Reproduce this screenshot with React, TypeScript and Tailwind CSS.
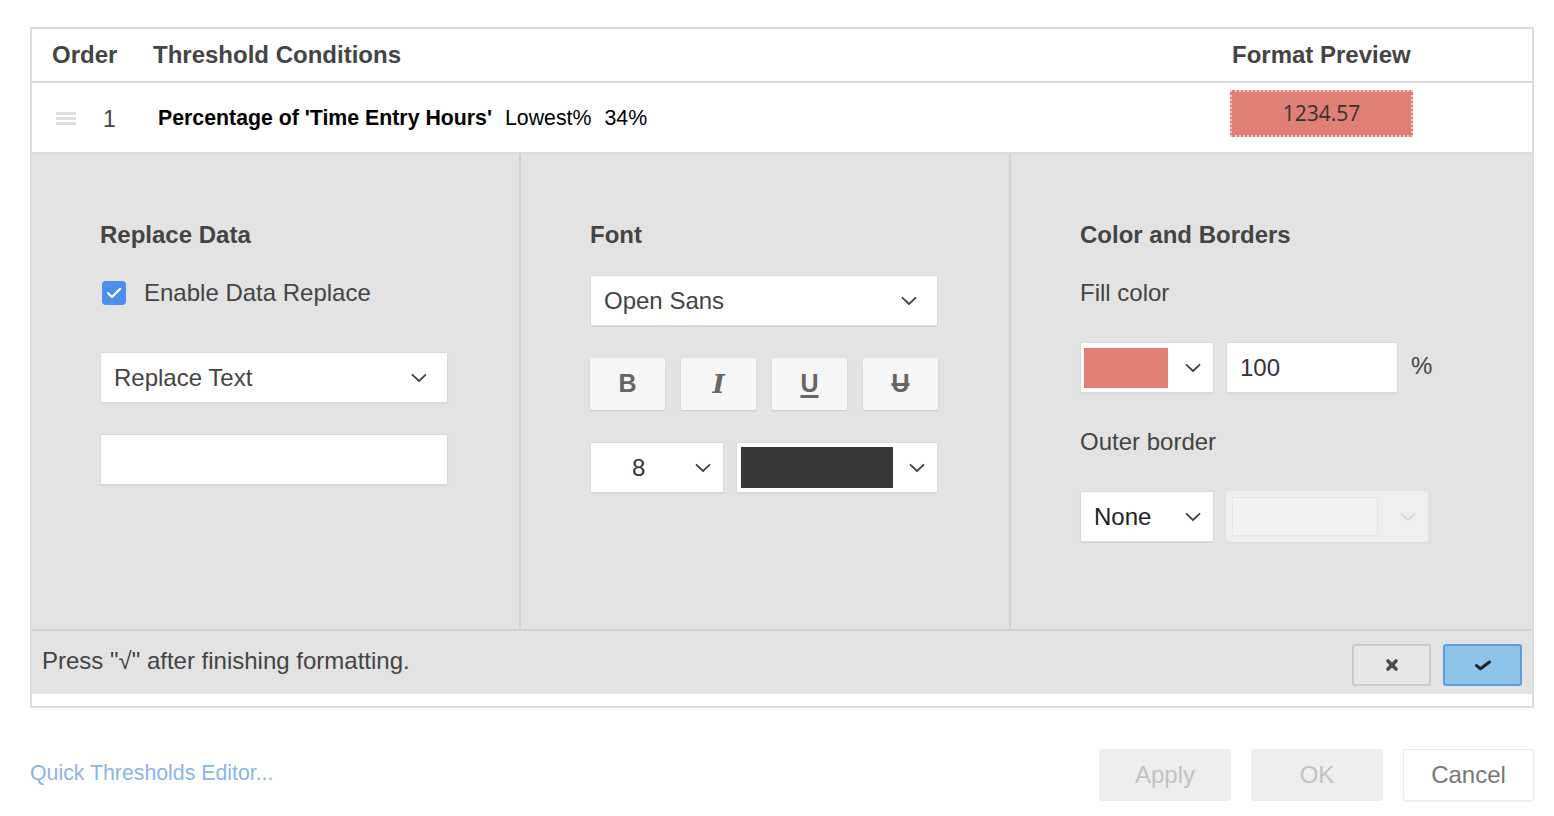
import React from "react";

const SANS = "font-['Liberation_Sans',Arial,sans-serif]";

function Chevron({ className = "" }: { className?: string }) {
  return (
    <svg width="16" height="10" viewBox="0 0 16 10" className={className} fill="none">
      <path d="M1.5 1.8 L8 8 L14.5 1.8" stroke="currentColor" strokeWidth="1.8" strokeLinecap="round" strokeLinejoin="round" />
    </svg>
  );
}

function SelectBox({
  children,
  className = "",
  chevronClass = "text-[#444]",
  pr = "pr-[20px]",
}: {
  children?: React.ReactNode;
  className?: string;
  chevronClass?: string;
  pr?: string;
}) {
  return (
    <div
      className={`flex items-center justify-between bg-white border border-[#dadada] rounded-[2px] shadow-[0_1px_1px_rgba(0,0,0,0.06)] ${pr} ${className}`}
    >
      <div className="flex-1 min-w-0 flex items-center h-full">{children}</div>
      <Chevron className={chevronClass} />
    </div>
  );
}

function StyleButton({ children }: { children: React.ReactNode }) {
  return (
    <div className="h-[52px] w-[75px] flex items-center justify-center bg-[#f6f6f6] rounded-[2px] shadow-[0_1px_2px_rgba(0,0,0,0.12)]">
      {children}
    </div>
  );
}

export default function App() {
  return (
    <div className={`${SANS} bg-white w-[1554px] h-[816px] pt-[27px] pl-[30px]`}>
      {/* threshold table */}
      <div className="w-[1504px] border-2 border-[#dcdcdc]">
        {/* header */}
        <div className="h-[54px] flex items-center border-b-2 border-[#dcdcdc] text-[24px] font-bold text-[#444] leading-[28px]">
          <div className="pl-[20px] w-[121px]">Order</div>
          <div className="flex-1">Threshold Conditions</div>
          <div className="w-[300px]">Format Preview</div>
        </div>

        {/* condition row */}
        <div className="h-[71px] flex items-center border-b-2 border-[#dcdcdc]">
          <div className="pl-[24px] w-[71px] flex flex-col gap-[2px] pt-[2px]">
            <div className="h-[3px] w-[20px] bg-[#dfdfdf]" />
            <div className="h-[3px] w-[20px] bg-[#dfdfdf]" />
            <div className="h-[3px] w-[20px] bg-[#dfdfdf]" />
          </div>
          <div className="w-[55px] text-[23px] text-[#444] leading-[26px] pt-[3px]">1</div>
          <div className="flex-1 flex items-center text-[21.3px] leading-[24px] text-black">
            <span className="font-bold">Percentage of 'Time Entry Hours'</span>
            <span className="ml-[13px]">Lowest%</span>
            <span className="ml-[13px]">34%</span>
          </div>
          <div className="w-[302px]">
            <div className="w-[183px] h-[47px] bg-[#df7f76] border-2 border-dotted border-[#f3c9c3] flex items-center justify-center font-['Open_Sans',sans-serif] text-[21px] text-[#333] mb-[8px]">
              1234.57
            </div>
          </div>
        </div>

        {/* editor panel */}
        <div className="grid grid-cols-[489px_490px_1fr] bg-[#e3e3e3] h-[477px] border-b-2 border-[#d2d2d2]">
          {/* Replace Data */}
          <div className="border-r-2 border-[#d2d2d2] pl-[68px] pt-[67px]">
            <div className="text-[24px] font-bold text-[#444] leading-[28px]">Replace Data</div>
            <div className="mt-[30px] flex items-center h-[28px]">
              <div className="ml-[2px] w-[24px] h-[24px] rounded-[4px] bg-[#4a8ef0] flex items-center justify-center">
                <svg width="16" height="12" viewBox="0 0 16 12" fill="none">
                  <path d="M2 6.2 L6 10 L14 2" stroke="white" strokeWidth="2.4" strokeLinecap="round" strokeLinejoin="round" />
                </svg>
              </div>
              <span className="ml-[18px] text-[24px] text-[#444] leading-[28px]">Enable Data Replace</span>
            </div>
            <SelectBox className="mt-[45px] w-[348px] h-[51px]">
              <span className="pl-[13px] text-[24px] text-[#444]">Replace Text</span>
            </SelectBox>
            <div className="mt-[31px] w-[348px] h-[51px] bg-white border border-[#dadada] rounded-[2px] shadow-[0_1px_1px_rgba(0,0,0,0.06)]" />
          </div>

          {/* Font */}
          <div className="border-r-2 border-[#d2d2d2] pl-[69px] pt-[67px]">
            <div className="text-[24px] font-bold text-[#444] leading-[28px]">Font</div>
            <SelectBox className="mt-[26px] w-[348px] h-[51px]">
              <span className="pl-[13px] text-[24px] text-[#444]">Open Sans</span>
            </SelectBox>
            <div className="mt-[32px] w-[348px] flex justify-between">
              <StyleButton>
                <span className="text-[25px] font-bold text-[#666]">B</span>
              </StyleButton>
              <StyleButton>
                <span className="text-[26px] font-bold italic text-[#666] font-['DejaVu_Serif',serif]">I</span>
              </StyleButton>
              <StyleButton>
                <span className="text-[25px] font-bold text-[#666] underline decoration-[3px] underline-offset-[3px]">U</span>
              </StyleButton>
              <StyleButton>
                <span className="text-[25px] font-bold text-[#666] line-through decoration-[3px]">U</span>
              </StyleButton>
            </div>
            <div className="mt-[32px] w-[348px] flex justify-between">
              <SelectBox className="w-[134px] h-[51px]" pr="pr-[12px]">
                <span className="pl-[41px] text-[24px] text-[#333]">8</span>
              </SelectBox>
              <SelectBox className="w-[202px] h-[51px]" pr="pr-[12px]">
                <div className="ml-[4px] w-[152px] h-[41px] bg-[#363638]" />
              </SelectBox>
            </div>
          </div>

          {/* Color and Borders */}
          <div className="pl-[69px] pt-[67px]">
            <div className="text-[24px] font-bold text-[#444] leading-[28px]">Color and Borders</div>
            <div className="mt-[30px] text-[24px] text-[#444] leading-[28px]">Fill color</div>
            <div className="mt-[35px] flex items-start">
              <SelectBox className="w-[134px] h-[51px]" pr="pr-[12px]">
                <div className="ml-[3px] w-[84px] h-[40px] bg-[#df7f76]" />
              </SelectBox>
              <div className="ml-[12px] w-[172px] h-[51px] bg-white border border-[#dadada] rounded-[2px] shadow-[0_1px_1px_rgba(0,0,0,0.06)] flex items-center pl-[13px] text-[24px] text-[#333]">
                100
              </div>
              <span className="ml-[13px] mt-[6px] text-[24px] text-[#444]">%</span>
            </div>
            <div className="mt-[35px] text-[24px] text-[#444] leading-[28px]">Outer border</div>
            <div className="mt-[35px] flex items-start">
              <SelectBox className="w-[134px] h-[51px]" pr="pr-[12px]">
                <span className="pl-[13px] text-[24px] text-[#222]">None</span>
              </SelectBox>
              <div className="ml-[12px] w-[202px] h-[51px] bg-[#efefef] rounded-[2px] flex items-center justify-between pl-[6px] pr-[12px] shadow-[0_1px_1px_rgba(0,0,0,0.04)]">
                <div className="w-[146px] h-[39px] bg-[#f2f2f2] border border-[#e6e6e6]" />
                <Chevron className="text-[#d6d6d6]" />
              </div>
            </div>
          </div>
        </div>

        {/* confirm bar */}
        <div className="h-[63px] bg-[#e3e3e3] flex items-center justify-between pl-[10px] pr-[10px]">
          <span className="text-[24px] text-[#444] leading-[28px] -mt-[3px]">Press "√" after finishing formatting.</span>
          <div className="flex gap-[12px] pt-[4px]">
            <div className="w-[79px] h-[42px] rounded-[3px] border-2 border-[#cbcbcb] bg-[#e7e7e7] flex items-center justify-center">
              <svg width="14" height="14" viewBox="0 0 14 14">
                <path d="M3 3 L11 11 M11 3 L3 11" stroke="#4a4a4a" strokeWidth="3.6" strokeLinecap="round" />
              </svg>
            </div>
            <div className="w-[79px] h-[42px] rounded-[3px] border-2 border-[#5c9fd8] bg-[#8ec4ea] flex items-center justify-center">
              <svg width="18" height="12" viewBox="0 0 18 12">
                <path d="M2.5 6.5 L6.5 9.8 L15.5 3" stroke="#222" strokeWidth="3" strokeLinecap="round" strokeLinejoin="round" fill="none" />
              </svg>
            </div>
          </div>
        </div>
        <div className="h-[12px] bg-white" />
      </div>

      {/* dialog footer */}
      <div className="w-[1504px] mt-[41px] flex items-center justify-between">
        <span className="text-[21.3px] text-[#8db4e9] leading-[24px] -mt-[4px]">Quick Thresholds Editor...</span>
        <div className="flex gap-[20px]">
          <div className="w-[132px] h-[52px] rounded-[3px] bg-[#eeeeee] flex items-center justify-center text-[24px] text-[#c2c2c2]">Apply</div>
          <div className="w-[132px] h-[52px] rounded-[3px] bg-[#eeeeee] flex items-center justify-center text-[24px] text-[#c2c2c2]">OK</div>
          <div className="w-[131px] h-[52px] rounded-[3px] bg-white border border-[#ececec] shadow-[0_1px_2px_rgba(0,0,0,0.06)] flex items-center justify-center text-[24px] text-[#777]">Cancel</div>
        </div>
      </div>
    </div>
  );
}
